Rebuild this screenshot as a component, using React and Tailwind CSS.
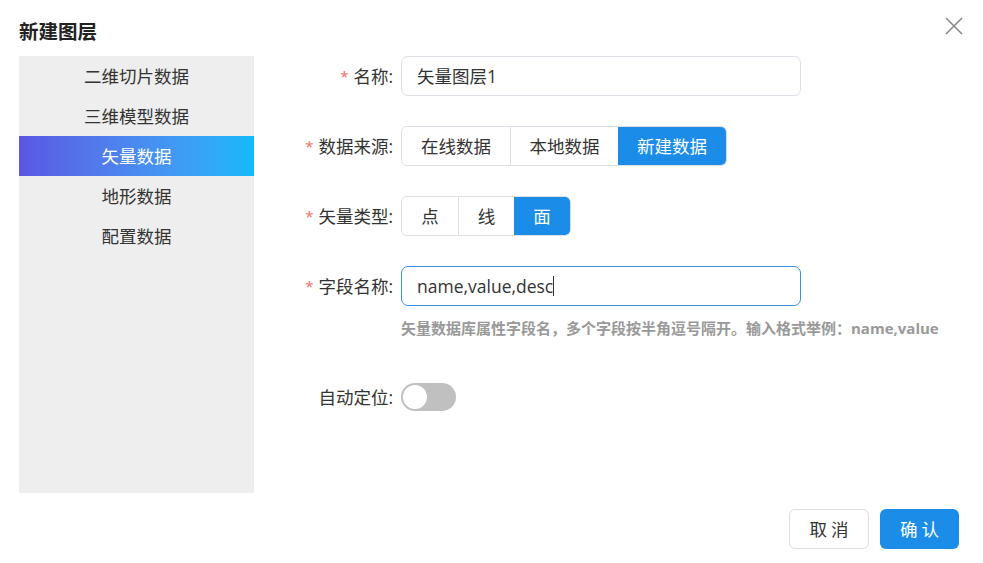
import { useState } from 'react'

const FONT = { fontFamily: '"Open Sans", "Noto Sans CJK SC", sans-serif' }

const SIDE_ITEMS = ['二维切片数据', '三维模型数据', '矢量数据', '地形数据', '配置数据']

function Label({ required, children }) {
  return (
    <div className="w-[147px] shrink-0 pr-[8px] flex items-center justify-end text-[17.5px] text-[#333]">
      {required && <span className="text-[#f56c6c] mr-[5px] text-[15px]">*</span>}
      <span>{children}:</span>
    </div>
  )
}

function Segmented({ options, active, width }) {
  return (
    <div className="flex h-[40px] rounded-[6px] border border-[#dcdfe6] overflow-hidden">
      {options.map((o, i) => (
        <div
          key={o}
          style={{ width }}
          className={
            'flex items-center justify-center text-[17.5px] ' +
            (i === active ? 'bg-[#1b8de9] text-white' : 'bg-white text-[#333]') +
            (i > 0 && i !== active ? ' border-l border-[#dcdfe6]' : '')
          }
        >
          {o}
        </div>
      ))}
    </div>
  )
}

export default function App() {
  const [sel, setSel] = useState(2)
  return (
    <div className="w-[983px] h-[563px] bg-white relative overflow-hidden" style={FONT}>
      <div className="h-[56px] pl-[19px] pt-[18px] text-[19.5px] font-bold text-[#222] leading-[28px]">新建图层</div>
      <button className="absolute right-[20px] top-[17px] w-[18px] h-[18px]">
        <svg viewBox="0 0 18 18" width="18" height="18">
          <path d="M1 1L17 17M17 1L1 17" stroke="#8a8a8a" strokeWidth="1.6" />
        </svg>
      </button>

      <div className="flex">
        <div className="ml-[19px] w-[235px] h-[437px] bg-[#eeeeee] flex flex-col">
          {SIDE_ITEMS.map((s, i) => (
            <div
              key={s}
              onClick={() => setSel(i)}
              className={
                'h-[40px] flex items-center justify-center text-[17.5px] cursor-pointer ' +
                (i === sel ? 'bg-gradient-to-r from-[#5a57e4] to-[#0fb9fb] text-white' : 'text-[#333]')
              }
            >
              {s}
            </div>
          ))}
        </div>

        <div className="flex flex-col">
          <div className="flex h-[40px]">
            <Label required>名称</Label>
            <div className="w-[400px] h-[40px] rounded-[7px] border border-[#dcdfe6] flex items-center px-[15px] text-[17.5px] text-[#333]">
              矢量图层1
            </div>
          </div>

          <div className="flex h-[40px] mt-[30px]">
            <Label required>数据来源</Label>
            <Segmented options={['在线数据', '本地数据', '新建数据']} active={2} width={108} />
          </div>

          <div className="flex h-[40px] mt-[30px]">
            <Label required>矢量类型</Label>
            <Segmented options={['点', '线', '面']} active={2} width={56} />
          </div>

          <div className="flex h-[40px] mt-[30px]">
            <Label required>字段名称</Label>
            <div className="w-[400px] h-[40px] rounded-[7px] border border-[#3d8fe0] flex items-center px-[15px] text-[17.5px] text-[#333]">
              name,value,desc<span className="inline-block w-px h-[20px] bg-[#333]" />
            </div>
          </div>
          <div className="flex mt-[11px]">
            <div className="w-[147px] shrink-0" />
            <div className="text-[15px] font-bold text-[#999] leading-[22px] whitespace-nowrap">
              矢量数据库属性字段名，多个字段按半角逗号隔开。输入格式举例：name,value
            </div>
          </div>

          <div className="flex h-[40px] mt-[38px]">
            <Label>自动定位</Label>
            <div className="flex items-center">
              <div className="w-[55px] h-[28px] rounded-full bg-[#c0c0c0] p-[2px] flex items-center">
                <div className="w-[24px] h-[24px] rounded-full bg-white" />
              </div>
            </div>
          </div>
        </div>
      </div>

      <div className="flex justify-end gap-[11px] pr-[24px] mt-[16px]">
        <button className="w-[80px] h-[40px] rounded-[6px] border border-[#dcdfe6] bg-white text-[17.5px] text-[#333] tracking-[4px] pl-[4px]">
          取消
        </button>
        <button className="w-[79px] h-[40px] rounded-[6px] bg-[#1b8de9] text-[17.5px] text-white tracking-[4px] pl-[4px]">
          确认
        </button>
      </div>
    </div>
  )
}
